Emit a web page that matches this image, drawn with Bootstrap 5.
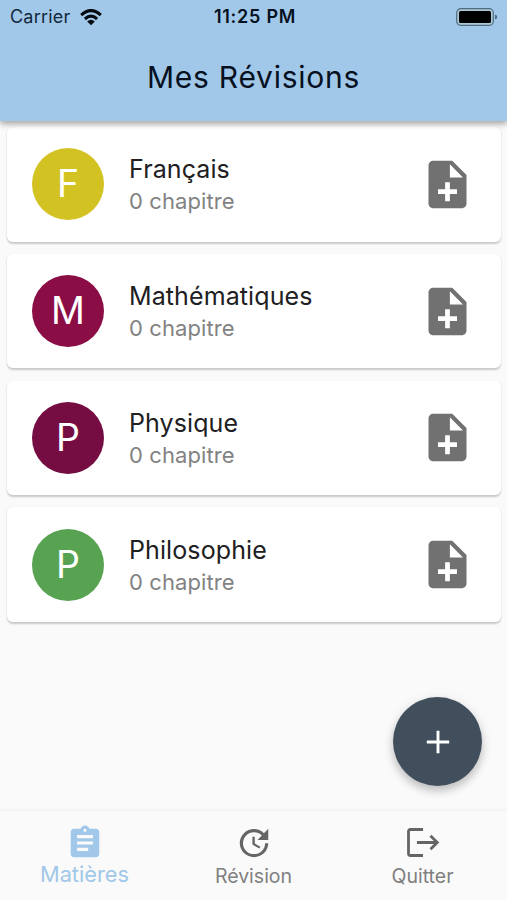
<!DOCTYPE html>
<html lang="fr">
<head>
<meta charset="utf-8">
<meta name="viewport" content="width=device-width, initial-scale=1">
<title>Mes Révisions</title>
<link href="https://cdn.jsdelivr.net/npm/bootstrap@5.3.0/dist/css/bootstrap.min.css" rel="stylesheet">
<style>
  body { font-family: Inter, "Liberation Sans", sans-serif; background: #fafafa; color: #202022; }
  .screen { height: 900px; }
  .app-header { height: 121px; background: #a1c8e8; color: #06101f; box-shadow: 0 3px 6px rgba(0,0,0,.34); z-index: 2; }
  .status { height: 34px; padding: 0 9px 0 10px; font-size: 18px; line-height: 34px; }
  .status .carrier { letter-spacing: .2px; color: #12283c; gap: 10px; }
  .status .clock { font-size: 18px; letter-spacing: .75px; padding-left: 2px; }
  .app-title { font-size: 30px; font-weight: 400; line-height: 36px; margin: 25px 0 0; letter-spacing: .75px; }
  .subjects { padding: 6px 6px 0 7px; gap: 12.25px; }
  .subject { height: 114.5px; border: 0; border-radius: 6px; padding: 0 25px; box-shadow: 0 1.5px 2px rgba(0,0,0,.2); }
  .avatar { width: 72px; height: 72px; color: #fff; font-size: 37.5px; line-height: 72px; margin-right: 25px; }
  .subject-text { padding-top: 2px; }
  .subject-name { font-size: 25px; line-height: 32px; letter-spacing: .1px; }
  .subject-info { font-size: 22px; line-height: 32px; color: #828282; letter-spacing: .1px; }
  .add-note { width: 57px; height: 57px; color: #717171; }
  .fab { position: absolute; right: 25px; bottom: 114px; width: 89px; height: 89px; background: #414f5c; color: #fff; box-shadow: 0 5px 9px rgba(0,0,0,.2), 0 2px 14px rgba(0,0,0,.08); }
  .tabs { height: 91px; border-top: 2px solid #f4f4f4; background: #fafafa; color: #707070; }
  .tab-item { color: #808080; font-size: 19.5px; line-height: 24px; padding-top: 13px; text-decoration: none; }
  .tab-item svg { color: #656565; }
  .tab-item span { padding-top: 2px; }
  .tab-item.current, .tab-item.current svg { color: #a1c8e8; }
  .tab-item.current { font-size: 21.8px; }
  .tab-item.current span { padding-top: 0; }
</style>
<script src="https://cdn.jsdelivr.net/npm/bootstrap@5.3.0/dist/js/bootstrap.bundle.min.js"></script>
</head>
<body>
<svg width="0" height="0" class="d-none">
  <symbol id="note-add" viewBox="0 0 24 24"><path fill="currentColor" d="M14 2H6c-1.1 0-1.99.9-1.99 2L4 20c0 1.1.89 2 1.99 2H18c1.1 0 2-.9 2-2V8l-6-6zm2 14h-3v3h-2v-3H8v-2h3v-3h2v3h3v2zm-3-7V3.500L18.500 9H13z"/></symbol>
</svg>
<div class="screen d-flex flex-column position-relative overflow-hidden">
  <header class="app-header position-relative flex-shrink-0">
    <div class="status row g-0 align-items-center">
      <div class="col carrier d-flex align-items-center">Carrier
        <svg width="22" height="17" viewBox="0 0 22 17"><g fill="none" stroke="#050a10" stroke-width="3.1"><path d="M1.2 6.2Q11-3.1 20.8 6.2"/><path d="M4.9 10Q11 4.4 17.1 10"/></g><path fill="#050a10" d="M7.2 12.4Q11 9.2 14.8 12.4L11 16.2z"/></svg>
      </div>
      <div class="col-auto clock fw-semibold">11:25 PM</div>
      <div class="col d-flex justify-content-end">
        <svg width="42" height="18" viewBox="0 0 42 18"><rect x=".7" y=".7" width="36.6" height="16.6" rx="4" fill="#abc9d5" stroke="#516c80" stroke-width="1.2"/><rect x="3" y="3" width="32" height="12" rx="1.5" fill="#000"/><path d="M39 6.5q2.3.7 2.3 2.5T39 11.5z" fill="#516c80"/></svg>
      </div>
    </div>
    <h1 class="app-title text-center">Mes Révisions</h1>
  </header>

  <main class="subjects d-flex flex-column flex-grow-1">
    <article class="card subject flex-row align-items-center">
      <div class="avatar rounded-circle text-center flex-shrink-0" style="background:#d3c322">F</div>
      <div class="subject-text flex-grow-1"><div class="subject-name">Français</div><div class="subject-info">0 chapitre</div></div>
      <svg class="add-note"><use href="#note-add"/></svg>
    </article>
    <article class="card subject flex-row align-items-center">
      <div class="avatar rounded-circle text-center flex-shrink-0" style="background:#8b0d45">M</div>
      <div class="subject-text flex-grow-1"><div class="subject-name">Mathématiques</div><div class="subject-info">0 chapitre</div></div>
      <svg class="add-note"><use href="#note-add"/></svg>
    </article>
    <article class="card subject flex-row align-items-center">
      <div class="avatar rounded-circle text-center flex-shrink-0" style="background:#750d43">P</div>
      <div class="subject-text flex-grow-1"><div class="subject-name">Physique</div><div class="subject-info">0 chapitre</div></div>
      <svg class="add-note"><use href="#note-add"/></svg>
    </article>
    <article class="card subject flex-row align-items-center">
      <div class="avatar rounded-circle text-center flex-shrink-0" style="background:#58a351">P</div>
      <div class="subject-text flex-grow-1"><div class="subject-name">Philosophie</div><div class="subject-info">0 chapitre</div></div>
      <svg class="add-note"><use href="#note-add"/></svg>
    </article>
  </main>

  <button class="fab btn rounded-circle border-0 p-0 d-flex align-items-center justify-content-center" aria-label="Ajouter">
    <svg width="24" height="24" viewBox="0 0 24 24"><path d="M12 .8v22.4M.8 12h22.4" stroke="#fff" stroke-width="2.9"/></svg>
  </button>

  <nav class="tabs row g-0 flex-shrink-0">
    <a class="tab-item current col d-flex flex-column align-items-center" href="#">
      <svg width="38" height="38" viewBox="0 0 24 24"><path fill="currentColor" d="M19 3h-4.18C14.4 1.84 13.3 1 12 1c-1.3 0-2.4.84-2.82 2H5c-1.1 0-2 .9-2 2v14c0 1.1.9 2 2 2h14c1.1 0 2-.9 2-2V5c0-1.1-.9-2-2-2zm-7 0c.55 0 1 .45 1 1s-.45 1-1 1-1-.45-1-1 .45-1 1-1zm2 14H7v-2h7v2zm3-4H7v-2h10v2zm0-4H7V7h10v2z"/></svg>
      <span>Matières</span>
    </a>
    <a class="tab-item col d-flex flex-column align-items-center" href="#">
      <svg width="38" height="38" viewBox="0 0 24 24"><path fill="currentColor" d="M21 10.12h-6.78l2.74-2.82c-2.73-2.7-7.15-2.8-9.88-.1-2.73 2.71-2.73 7.08 0 9.79s7.15 2.71 9.88 0C18.32 15.65 19 14.08 19 12.1h2c0 1.98-.88 4.55-2.64 6.29-3.51 3.48-9.21 3.48-12.72 0-3.5-3.47-3.53-9.11-.02-12.58s9.14-3.47 12.65 0L21 3v7.12zM12.5 8v4.25l3.5 2.08-.72 1.21L11 13V8h1.5z"/></svg>
      <span>Révision</span>
    </a>
    <a class="tab-item col d-flex flex-column align-items-center" href="#">
      <svg width="38" height="38" viewBox="0 0 38 38"><g fill="none" stroke="currentColor" stroke-width="2.8"><path d="M19 5.500H6.500Q4.500 5.500 4.500 7.500V29.500Q4.500 31.500 6.500 31.500H19" stroke-linejoin="round"/><path d="M13 18.500H33M26.500 11.700L33.300 18.500L26.500 25.300"/></g></svg>
      <span>Quitter</span>
    </a>
  </nav>
</div>
</body>
</html>
